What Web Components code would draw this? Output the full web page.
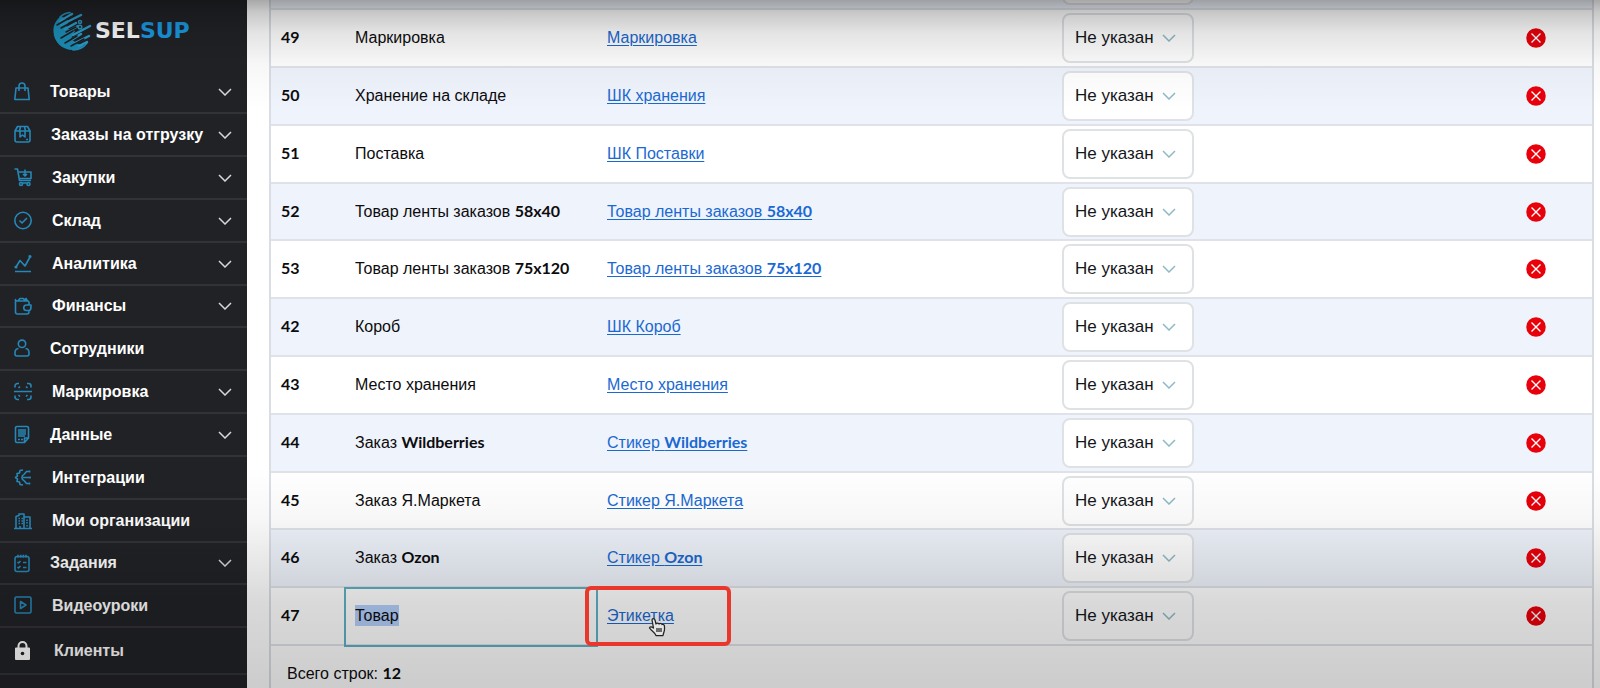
<!DOCTYPE html>
<html lang="ru">
<head>
<meta charset="utf-8">
<title>SelSup</title>
<style>
html, body { height: 100%; margin: 0; }
body { font: 16px/20px "Liberation Sans", Arial, sans-serif; background: #fff; overflow: hidden; }
</style>
</head>
<body>
<selsup-app></selsup-app>
<script>
const ICONS = {
  bag: [16, 'M2 6h12l1.200 11.500H.8zM5 9V4a3 3 0 0 1 6 0v5'],
  box: [17, 'M3.500 1.500h10L16 6v9a2 2 0 0 1-2 2H3a2 2 0 0 1-2-2V6zM1 6h15M5.500 6l1-4.500M11.500 6l-1-4.500M6 6v6l2.500-2 2.500 2V6M12 14.500h2'],
  cart: [18, 'M.5 1H3.500l2 11.500H17M5 4h12v6.500H6M11 1.500v6M9 6l2 2 2-2M5.500 16a1.500 1.500 0 1 0 3 0a1.500 1.500 0 1 0-3 0M13 16a1.500 1.500 0 1 0 3 0a1.500 1.500 0 1 0-3 0M8.500 15h4.500'],
  check: [18, 'M.8 9.500a8.200 8.200 0 1 0 16.400 0a8.200 8.200 0 1 0-16.400 0M5.500 9.500l2.500 2.500 5-5'],
  chart: [18, 'M1 17.500h16M2 13l4-6.500 5 5.500 5-9M1.200 13a.8.8 0 1 0 1.600 0a.8.8 0 1 0-1.600 0M15.200 2.500a.8.8 0 1 0 1.600 0a.8.8 0 1 0-1.600 0'],
  wallet: [18, 'M15 7.500V5.500a1.500 1.500 0 0 0-1.500-1.500H3a1.500 1.500 0 0 1-1.500-1.500V15a2 2 0 0 0 2 2h9.500a2 2 0 0 0 2-2v-1.500M4 4l2-2.500h3l2 1.500 1-1.500 1.500 2.500M17 8h-4.500a2.500 2.500 0 0 0 0 5.500H15c2 0 2-2 2-5.500z'],
  user: [16, 'M4.300 4.800a3.700 3.700 0 1 0 7.400 0a3.700 3.700 0 1 0-7.400 0M4.500 9.500A4 4 0 0 0 1 13.500v1.500a2 2 0 0 0 2 2h10a2 2 0 0 0 2-2v-1.500a4 4 0 0 0-3.500-4'],
  scan: [18, 'M1 5.500V4a2.500 2.500 0 0 1 2.500-2.500H5M13 1.500h1.500A2.500 2.500 0 0 1 17 4v1.500M1 13.500V15A2.500 2.500 0 0 0 3.500 17.500H5M13 17.500h1.500A2.500 2.500 0 0 0 17 15v-1.500M0 9.500h18M4.500 6l1.500-1.500M12 4.500l1.500 1.500M4.500 13l1.500 1.500M12 14.500l1.500-1.500'],
  doc: [16, 'M3 1.500h10a1.500 1.500 0 0 1 1.500 1.500v10l-4 4.500H3A1.500 1.500 0 0 1 1.500 16V3A1.500 1.500 0 0 1 3 1.500zM10.500 17v-4h4M4 5h8M4 7h8M4 9h8M4 11h7M4 14.500h2M7 14.500h2'],
  hub: [18, 'M9 2L6 2.500 5.500 5 3 5.500l.5 2.500L1.500 9.500l2 1.500L3 13.500l2.500.5L6 16.500l3 .5M15.500 3.500h-3L10 6.500M16 9.500H9M15.500 15.500h-3L10 12.500M10 6.500a3.200 3.200 0 0 0 0 6M15.500 2.500v2M16 8.500v2M15.500 14.500v2'],
  city: [18, 'M0 17.500h18M2 17V5.500l3-1V3h5v14M10 6h6v11M4.500 7.500h1.500M4.500 10h1.500M4.500 12.500h1.500M7.500 7.500H9M7.500 10H9M7.500 12.500H9M13 8.500v1.500M13 11v1.500M13 14v1.500M6 17v-2'],
  tasks: [16, 'M3 2.500h10a2 2 0 0 1 2 2v11a2 2 0 0 1-2 2H3a2 2 0 0 1-2-2v-11a2 2 0 0 1 2-2M4 .8v3M6.700 .8v3M9.300 .8v3M12 .8v3M3.500 8l1 1 2-2M9 8.500h3.500M3.500 13l1 1 2-2M9 13.500h3.500'],
  video: [18, 'M2.500 1h13A1.500 1.500 0 0 1 17 2.500v13a1.500 1.500 0 0 1-1.500 1.500h-13A1.500 1.500 0 0 1 1 15.500v-13A1.500 1.500 0 0 1 2.500 1zM6.500 5.500v7l5.500-3.500z'],
  lock: [20, '']
};

class SelsupLogo extends HTMLElement {
  connectedCallback() {
    this.attachShadow({ mode: 'open' }).innerHTML = `
      <style>
        :host { display: block; padding: 11px 0 0 53px; height: 57px; box-sizing: border-box; }
        a { display: flex; align-items: center; gap: 2px; text-decoration: none; color: #fff; font: 700 22px/40px "DejaVu Sans", sans-serif; }
        b { color: #1a9ae4; }
      </style>
      <a href="#"><svg width="40" height="40" viewBox="0 0 40 40" fill="none" stroke-linecap="round">
        <path d="M8 5C3 9 0 14 .5 21 1 31 9 39 20 39c5 0 8-2 11-5l-6-1-7-5 4-8-9-3 3-7z" fill="#1c8fb9"/>
        <path d="M20 39c6 0 11-3 14-7M17 1.500C13 2 9 4 7 6" stroke="#2492bd" stroke-width="1.500"/>
        <g stroke="#2b9fce" stroke-width="2.500"><path d="M7 10L19 3M8 14L28 4M12 18l11-6M16 20l9-5M20 24l17-9M20 28l8-5M22 32l14-7M26 35l8-4"/></g>
        <g stroke="#202125" stroke-width="1.500"><path d="M4 14l14-8M8 17l15-8M13 21l10-5M8 27l12-7M12 32l12-7M18 35l13-7"/></g>
        <circle cx="27" cy="16" r="1.800" fill="#202125" stroke="#2b97c2" stroke-width="1.500"/>
        <circle cx="27" cy="11" r="1.500" fill="#202125" stroke="#2b97c2" stroke-width="1.500"/>
      </svg><span>SEL<b>SUP</b></span></a>`;
  }
}

class NavItem extends HTMLElement {
  connectedCallback() {
    const name = this.getAttribute('icon'), [w, d] = ICONS[name];
    const art = name === 'lock'
      ? '<path d="M4.500 8V5a4 4 0 0 1 8 0v3" stroke="#fff" stroke-width="2"/><path d="M2 6.500h13a1 1 0 0 1 1 1V18a1 1 0 0 1-1 1H2a1 1 0 0 1-1-1V7.500a1 1 0 0 1 1-1z" fill="#fff" stroke="none"/><circle cx="8.500" cy="12.500" r="1.800" fill="#202125" stroke="none"/>'
      : `<path d="${d}"/>`;
    this.attachShadow({ mode: 'open' }).innerHTML = `
      <style>
        :host { display: block; border-bottom: 2px solid #323337; }
        a { display: flex; align-items: center; height: var(--item-height, 41px); padding: 0 15px 0 14px; color: #fff; text-decoration: none; font-weight: 700; }
        .icon { margin-right: 20px; flex: none; }
        span { flex: 1; white-space: nowrap; }
      </style>
      <a href="#"><svg class="icon" width="${w}" height="19" viewBox="0 0 ${w} 19" fill="none" stroke="#2688b8" stroke-width="1.600" stroke-linejoin="round">${art}</svg>
      <span><slot></slot></span>
      ${this.hasAttribute('sub') ? '<svg width="14" height="8" viewBox="0 0 14 8" fill="none" stroke="#d8d8d8" stroke-width="1.500"><path d="M1 1l6 6 6-6"/></svg>' : ''}</a>`;
  }
}

class StateSelect extends HTMLElement {
  connectedCallback() {
    this.attachShadow({ mode: 'open' }).innerHTML = `
      <style>
        :host { display: inline-grid; vertical-align: middle; }
        select, svg { grid-area: 1 / 1; }
        select { appearance: none; width: 132px; height: 50px; margin: 0; padding: 0 0 0 11px; border: 2px solid #dfe2e5; border-radius: 8px; background: #fff; color: #15161a; font: 17px/20px "Liberation Sans", Arial, sans-serif; }
        svg { justify-self: end; align-self: center; margin-right: 18px; pointer-events: none; }
      </style>
      <select aria-label="Принтер"><option>Не указан</option></select>
      <svg width="14" height="8" viewBox="0 0 14 8" fill="none" stroke="#8dbac6" stroke-width="1.500"><path d="M1 1l6 6 6-6"/></svg>`;
  }
}

class DeleteButton extends HTMLElement {
  connectedCallback() {
    this.attachShadow({ mode: 'open' }).innerHTML = `
      <style>
        :host { display: inline-block; vertical-align: middle; }
        button { display: block; border: 0; padding: 0; background: none; }
        svg { display: block; }
      </style>
      <button type="button" aria-label="Удалить"><svg width="20" height="20" viewBox="0 0 20 20"><circle cx="10" cy="10" r="9.750" fill="#e8000b"/><path d="M5.500 5.500l9 9m0-9l-9 9" stroke="#fff" stroke-width="1.400"/></svg></button>`;
  }
}

class TemplateTable extends HTMLElement {
  connectedCallback() {
    const rows = [
      ['49', 'Маркировка', 'Маркировка'],
      ['50', 'Хранение на складе', 'ШК хранения'],
      ['51', 'Поставка', 'ШК Поставки'],
      ['52', 'Товар ленты заказов <b>58x40</b>', 'Товар ленты заказов <b>58x40</b>'],
      ['53', 'Товар ленты заказов <b>75x120</b>', 'Товар ленты заказов <b>75x120</b>'],
      ['42', 'Короб', 'ШК Короб'],
      ['43', 'Место хранения', 'Место хранения'],
      ['44', 'Заказ <b>Wildberries</b>', 'Стикер <b>Wildberries</b>'],
      ['45', 'Заказ Я.Маркета', 'Стикер Я.Маркета'],
      ['46', 'Заказ <b>Ozon</b>', 'Стикер <b>Ozon</b>'],
      ['47', '<mark>Товар</mark>', 'Этикетка']
    ];
    const row = ([id, name, link]) => `<tr${id === '47' ? ' class="current"' : ''}><td><b>${id}</b></td><td>${name}</td><td><a href="#">${link}</a>${id === '47' ? '<pointer-note></pointer-note>' : ''}</td><td><state-select></state-select></td><td class="end"><delete-button></delete-button></td></tr>`;
    this.attachShadow({ mode: 'open' }).innerHTML = `
      <style>
        :host { display: flex; flex-direction: column; flex: 1; margin-top: -48px; border: solid #dadde3; border-width: 0 2px; box-sizing: border-box; color: #0c0c0e; }
        table { width: 100%; table-layout: fixed; border-collapse: separate; border-spacing: 0; }
        td { height: 56px; padding: 0 0 0 10px; border-bottom: 2px solid #dfe2e8; white-space: nowrap; vertical-align: middle; }
        tr:nth-child(odd) { background: #eff3fb; }
        tr:nth-child(5n) td { height: 55px; }
        .c1 { width: 74px; } .c2 { width: 252px; } .c3 { width: 455px; } .c5 { width: 112px; }
        td.end { text-align: center; padding: 0; }
        b { font-family: Lato, sans-serif; font-weight: 700; line-height: 1; }
        a { color: #1a69d2; text-underline-offset: 2px; }
        mark { background: #b4cffb; color: inherit; padding: 2px 0; }
        .current td:nth-child(2) { outline: 2px solid #5fb0c6; outline-offset: -1px; }
        .current td:nth-child(3) { position: relative; }
        footer { padding: 18px 16px; }
      </style>
      <table>
        <colgroup><col class="c1"><col class="c2"><col class="c3"><col><col class="c5"></colgroup>
        <tbody>
          <tr><td></td><td></td><td></td><td><state-select></state-select></td><td></td></tr>
          ${rows.map(row).join('')}
        </tbody>
      </table>
      <footer>Всего строк: <b>12</b></footer>`;
  }
}

class PointerNote extends HTMLElement {
  connectedCallback() {
    this.attachShadow({ mode: 'open' }).innerHTML = `
      <style>
        :host { position: absolute; left: -12px; top: -2px; width: 146px; height: 60px; box-sizing: border-box; border: 4px solid #ea372c; border-radius: 6px; pointer-events: none; z-index: 6; }
        svg { position: absolute; left: 59px; top: 27px; }
      </style>
      <svg width="18" height="20" viewBox="0 0 18 20" stroke="#222" stroke-width="1.250" stroke-linejoin="round" fill="#e4e4e4"><path d="M4 3c0-2 2.500-2 3 0l1 4c1-1.500 2.500-1 3 0 1-1 2.500-.5 3 .5 1.500-.5 2.500.5 2.500 2v3c0 2-1 3-1.500 6H8c-1-3-4-4-6.500-7.500 0-1.500 2-1.500 4 0z"/><path d="M9 11v4M11 11v4M13 11v4"/></svg>`;
  }
}

class SelsupApp extends HTMLElement {
  connectedCallback() {
    this.attachShadow({ mode: 'open' }).innerHTML = `
      <style>
        :host { display: grid; grid-template-columns: 247px 1fr; height: 100vh; overflow: hidden; position: relative; }
        nav { background: #212226; overflow: hidden; }
        nav-item:nth-of-type(6n) { --item-height: 40px; }
        nav-item:last-of-type { --item-height: 45px; }
        selsup-logo { margin-bottom: 14px; }
        main { display: flex; padding: 0 6px 0 22px; overflow: hidden; min-width: 0; }
        .shade { position: absolute; inset: 0; pointer-events: none; z-index: 5;
          background: linear-gradient(rgba(0,0,0,.34), rgba(0,0,0,.22) 12px, rgba(0,0,0,.11) 32px, rgba(0,0,0,.03) 64px, transparent 110px),
            linear-gradient(to top, rgba(0,0,0,.2), rgba(0,0,0,.15) 86px, rgba(0,0,0,.03) 170px, transparent 220px); }
      </style>
      <nav>
        <selsup-logo></selsup-logo>
        <nav-item icon="bag" sub>Товары</nav-item>
        <nav-item icon="box" sub>Заказы на отгрузку</nav-item>
        <nav-item icon="cart" sub>Закупки</nav-item>
        <nav-item icon="check" sub>Склад</nav-item>
        <nav-item icon="chart" sub>Аналитика</nav-item>
        <nav-item icon="wallet" sub>Финансы</nav-item>
        <nav-item icon="user">Сотрудники</nav-item>
        <nav-item icon="scan" sub>Маркировка</nav-item>
        <nav-item icon="doc" sub>Данные</nav-item>
        <nav-item icon="hub">Интеграции</nav-item>
        <nav-item icon="city">Мои организации</nav-item>
        <nav-item icon="tasks" sub>Задания</nav-item>
        <nav-item icon="video">Видеоуроки</nav-item>
        <nav-item icon="lock">Клиенты</nav-item>
      </nav>
      <main><template-table></template-table></main>
      <div class="shade"></div>`;
  }
}

customElements.define('selsup-logo', SelsupLogo);
customElements.define('nav-item', NavItem);
customElements.define('state-select', StateSelect);
customElements.define('delete-button', DeleteButton);
customElements.define('pointer-note', PointerNote);
customElements.define('template-table', TemplateTable);
customElements.define('selsup-app', SelsupApp);
</script>
</body>
</html>
